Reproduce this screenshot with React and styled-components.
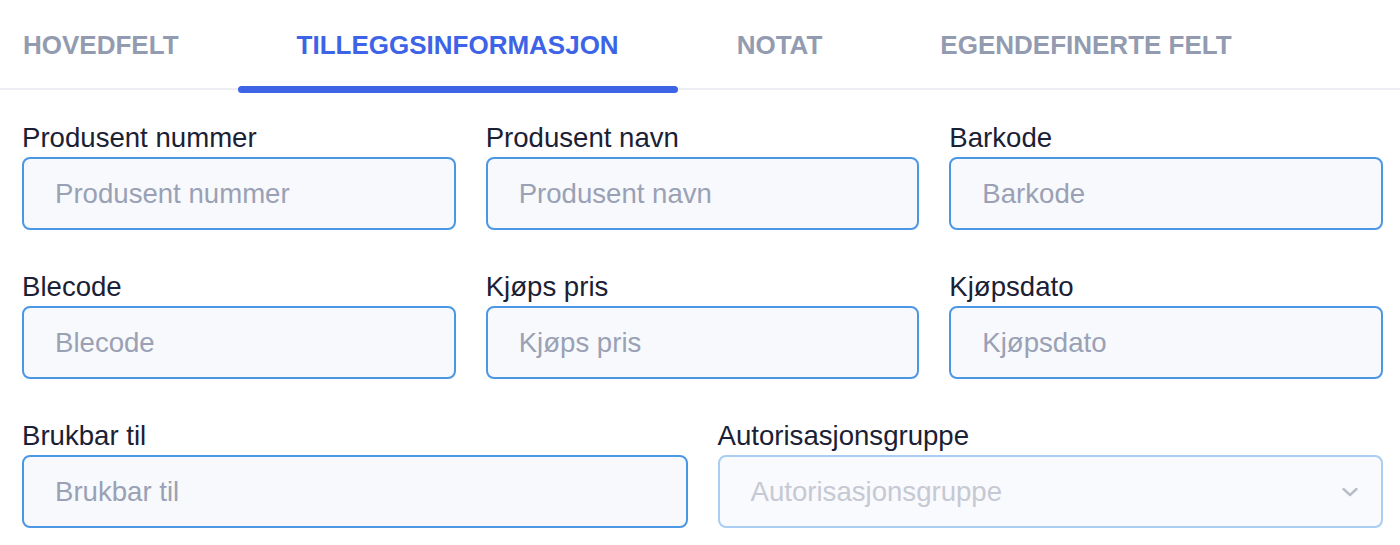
import React from 'react';
import styled, {createGlobalStyle} from "styled-components";

const GlobalStyle = createGlobalStyle`
body {
    margin: 0;
    background-color: #ffffff;
    font-family: "Liberation Sans", Arial, sans-serif;
}
`;

const tabs = ["Hovedfelt", "Tilleggsinformasjon", "Notat", "Egendefinerte felt"];

const rows = [
    ["Produsent nummer", "Produsent navn", "Barkode"],
    ["Blecode", "Kjøps pris", "Kjøpsdato"],
];

class App extends React.Component {

    constructor(props) {
        super(props);
        this.state = {active: 1}
    }

    render() {
        return (
            <Page>
                <GlobalStyle/>
                <TabBar>
                    {tabs.map((t, i) => (
                        <Tab key={t} active={i === this.state.active}
                             onClick={() => this.setState({active: i})}>
                            {t}
                        </Tab>
                    ))}
                </TabBar>

                <Form>
                    {rows.map((row, r) => (
                        <Grid key={r} cols={3}>
                            {row.map(name => (
                                <Field key={name}>
                                    <Label>{name}</Label>
                                    <Input placeholder={name}/>
                                </Field>
                            ))}
                        </Grid>
                    ))}
                    <Grid cols={2}>
                        <Field>
                            <Label>Brukbar til</Label>
                            <Input placeholder="Brukbar til"/>
                        </Field>
                        <Field>
                            <Label>Autorisasjonsgruppe</Label>
                            <SelectBox>
                                <SelectText>Autorisasjonsgruppe</SelectText>
                                <svg width="18" height="12" viewBox="0 0 18 12">
                                    <path d="M2.5 3 L9 9 L15.5 3" fill="none" stroke="#b9bdc8"
                                          strokeWidth="2.4" strokeLinecap="round" strokeLinejoin="round"/>
                                </svg>
                            </SelectBox>
                        </Field>
                    </Grid>
                </Form>
            </Page>
        )
    }
}

const Page = styled.div`
width: 1400px;
height: 545px;
overflow: hidden;
`;

const TabBar = styled.div`
display: flex;
flex-direction: row;
height: 90px;
margin-left: -36px;
border-bottom: 2px solid #eceef3;
box-sizing: border-box;
`;

const Tab = styled.div`
padding: 2px 59px 0;
height: 100%;
display: flex;
align-items: center;
box-sizing: border-box;
font-size: 26px;
font-weight: bold;
text-transform: uppercase;
color: ${props => props.active ? "#3d63e6" : "#939bb1"};
position: relative;
cursor: pointer;
white-space: nowrap;
&::after {
    content: "";
    display: ${props => props.active ? "block" : "none"};
    position: absolute;
    left: 0;
    right: 0;
    bottom: -5px;
    height: 7px;
    border-radius: 4px;
    background-color: #3d63e6;
}
`;

const Form = styled.div`
display: flex;
flex-direction: column;
gap: 41px;
padding: 32px 17px 0 22px;
`;

const Grid = styled.div`
display: grid;
grid-template-columns: repeat(${props => props.cols}, 1fr);
column-gap: 30px;
`;

const Field = styled.div`
display: flex;
flex-direction: column;
gap: 3px;
`;

const Label = styled.div`
font-size: 27.6px;
line-height: 32px;
color: #1b2134;
`;

const Input = styled.input`
height: 73px;
box-sizing: border-box;
border: 2px solid #4c97e4;
border-radius: 8px;
background-color: #f7f9fc;
padding: 0 31px;
font-family: "Liberation Sans", Arial, sans-serif;
font-size: 27.6px;
color: #1b2134;
outline: none;
&::placeholder {
    color: #9aa1b5;
}
`;

const SelectBox = styled.div`
height: 73px;
box-sizing: border-box;
border: 2px solid #a9cdf3;
border-radius: 8px;
background-color: #f9fafd;
padding: 0 22px 0 31px;
display: flex;
align-items: center;
justify-content: space-between;
`;

const SelectText = styled.span`
font-size: 27.6px;
color: #c6c9d3;
`;

export default App;
